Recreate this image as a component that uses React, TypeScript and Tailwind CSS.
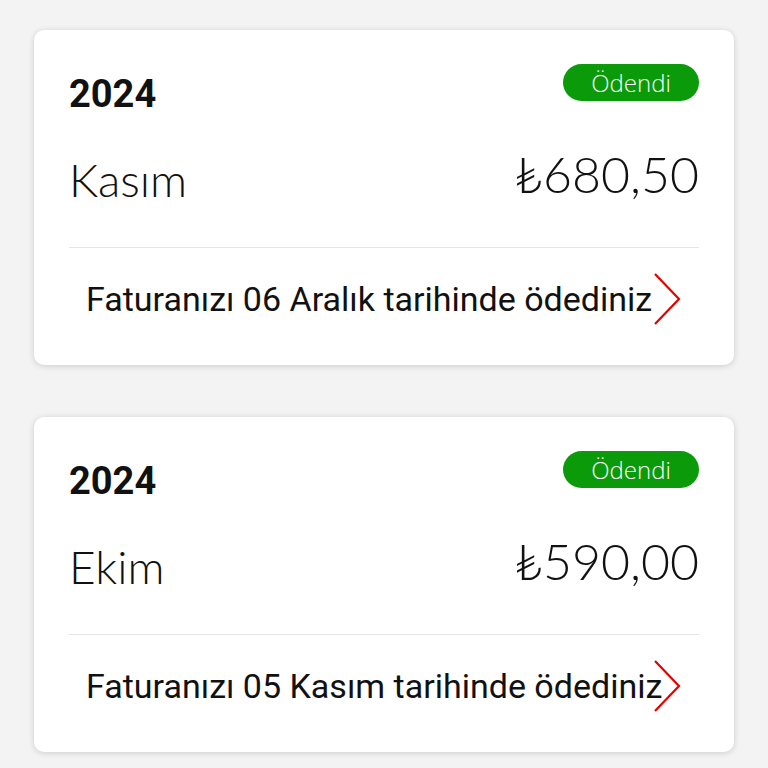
import React from "react";

function Chevron() {
  return (
    <svg width="28" height="52" viewBox="0 0 28 52" className="absolute right-[18px] top-0">
      <path d="M2 1 L26 26 L2 51" fill="none" stroke="#e60000" strokeWidth="2.2" />
    </svg>
  );
}

function Card({ month, amount, text }: { month: string; amount: string; text: string }) {
  return (
    <div className="bg-white rounded-[10px] shadow-[0_1px_6px_rgba(0,0,0,0.16)] h-[335px] px-[35px] pt-[34px]">
      <div className="flex justify-between items-start h-[37px]">
        <div className="mt-[8px] text-[38px] leading-[44px] font-bold text-[#111] font-['Roboto']">2024</div>
        <div className="h-[37px] w-[136px] rounded-full bg-[#0a9a0a] text-white flex items-center justify-center text-[24px] font-light font-['Open_Sans']">
          Ödendi
        </div>
      </div>
      <div className="flex justify-between items-start h-[147px] border-b border-[#e6e6e6] font-['Lato'] font-light text-[#111]">
        <div className="mt-[56px] text-[46px] leading-none">{month}</div>
        <div className="mt-[48px] text-[50px] leading-none">{amount}</div>
      </div>
      <div className="pt-[25px]">
        <div className="relative h-[52px] pl-[17px]">
          <span className="text-[34px] font-['Roboto'] text-[#111] leading-[52px] whitespace-nowrap">{text}</span>
          <Chevron />
        </div>
      </div>
    </div>
  );
}

export default function App() {
  return (
    <div className="min-h-[768px] bg-[#f3f3f3] px-[34px] pt-[30px] flex flex-col gap-[52px]">
      <Card month="Kasım" amount="₺680,50" text="Faturanızı 06 Aralık tarihinde ödediniz" />
      <Card month="Ekim" amount="₺590,00" text="Faturanızı 05 Kasım tarihinde ödediniz" />
    </div>
  );
}
